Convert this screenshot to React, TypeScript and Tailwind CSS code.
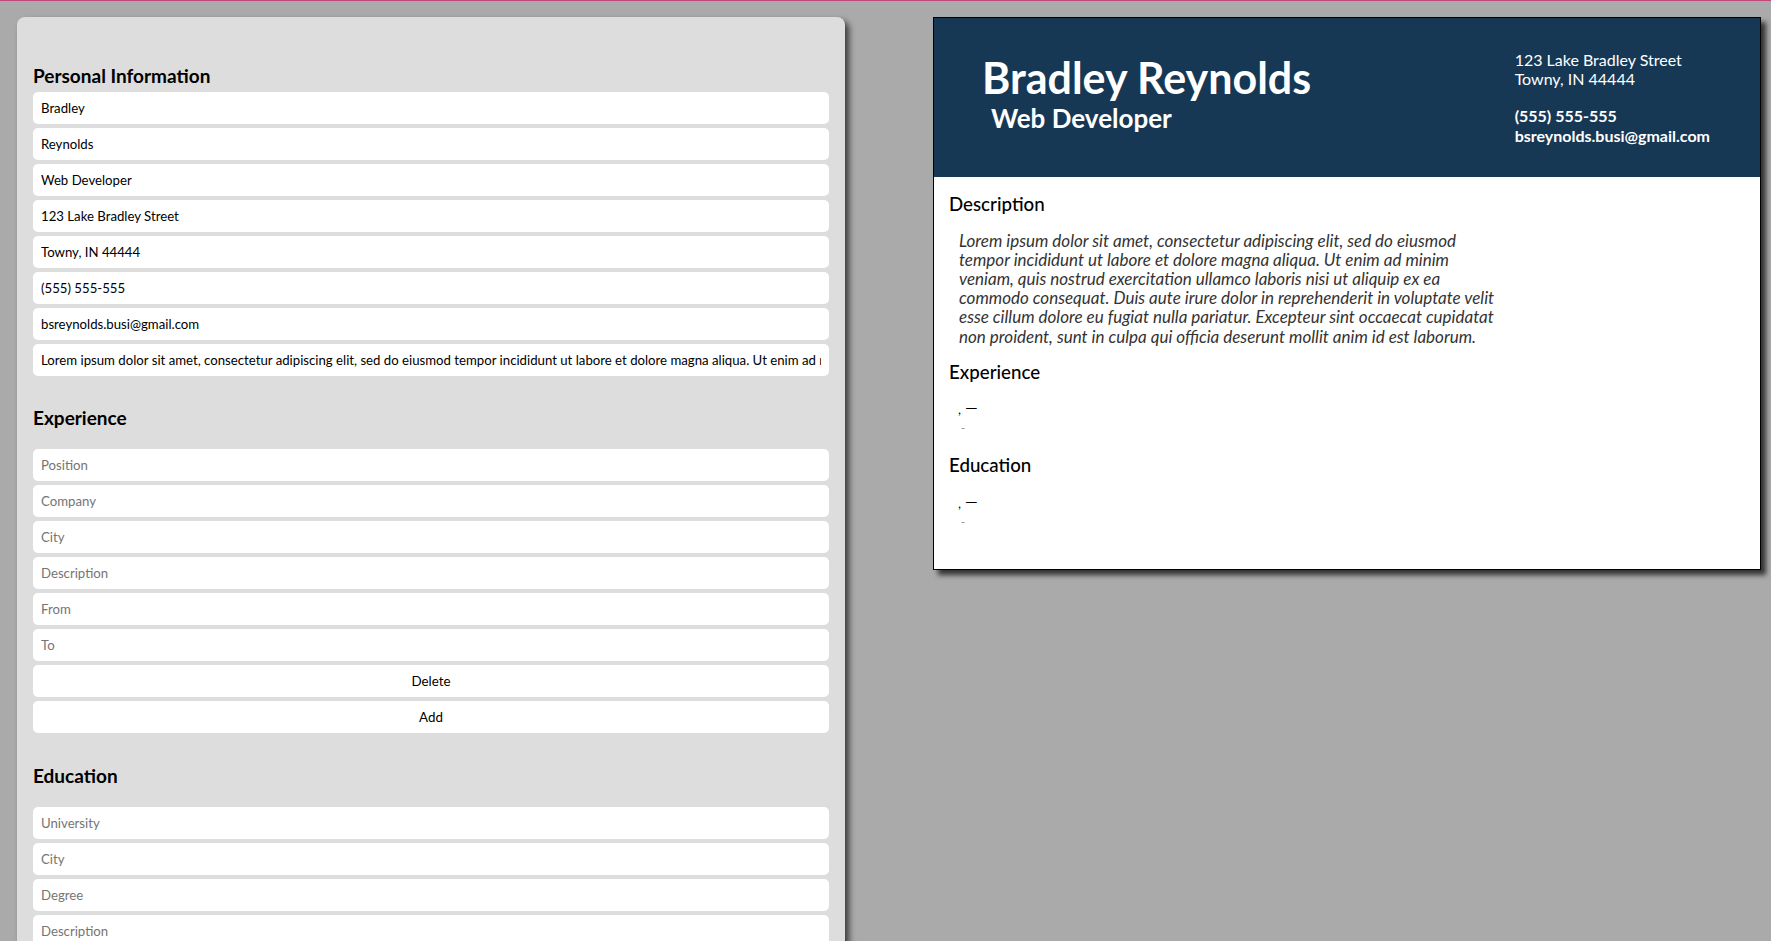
import React from "react";

const personal = [
  "Bradley",
  "Reynolds",
  "Web Developer",
  "123 Lake Bradley Street",
  "Towny, IN 44444",
  "(555) 555-555",
  "bsreynolds.busi@gmail.com",
  "Lorem ipsum dolor sit amet, consectetur adipiscing elit, sed do eiusmod tempor incididunt ut labore et dolore magna aliqua. Ut enim ad minim veniam, quis nostrud exercitation ullamco laboris nisi ut aliquip ex ea commodo consequat.",
];

const expFields = ["Position", "Company", "City", "Description", "From", "To"];
const eduFields = ["University", "City", "Degree", "Description", "From", "To"];

const inputCls =
  "block w-full h-[32px] rounded-[5px] bg-white px-[8px] text-[13.2px] text-black placeholder:text-[#757575] outline-none border-0";
const btnCls =
  "block w-full h-[32px] rounded-[5px] bg-white pt-px text-[13.33px] text-black text-center";

function Entry() {
  return (
    <div className="ml-[9px] mt-[15px]">
      <div className="text-[16px] leading-[19px] text-black">
        <span className="text-[13px]">,</span> <span className="relative top-[-1px]">—</span>
      </div>
      <div className="ml-[3px] mt-[2px] text-[11px] leading-[13px] text-[#888]">-</div>
    </div>
  );
}

export default function App() {
  return (
    <div className="min-h-screen bg-[#aaaaaa] font-['Lato','Noto_Sans',sans-serif] overflow-hidden">
      <div className="h-px bg-[#c2477a]" />
      <div className="flex items-start pl-[17px] pt-[16px] gap-[88px]">
        {/* Left form panel */}
        <div className="w-[828px] shrink-0 rounded-[8px] bg-[#dddddd] px-[16px] pt-[48px] pb-[40px] shadow-[4px_4px_6px_rgba(0,0,0,0.65)]">
          <h3 className="text-[19px] font-bold leading-[22.5px] text-black">Personal Information</h3>
          <div className="mt-[4px] flex flex-col gap-[4px]">
            {personal.map((v, i) => (
              <input key={i} className={inputCls} defaultValue={v} readOnly />
            ))}
          </div>

          <h3 className="mt-[31px] text-[19px] font-bold leading-[22.5px] text-black">Experience</h3>
          <div className="mt-[20px] flex flex-col gap-[4px]">
            {expFields.map((p) => (
              <input key={p} className={inputCls} placeholder={p} readOnly />
            ))}
            <button className={btnCls}>Delete</button>
            <button className={btnCls}>Add</button>
          </div>

          <h3 className="mt-[32px] text-[19px] font-bold leading-[22.5px] text-black">Education</h3>
          <div className="mt-[19px] flex flex-col gap-[4px]">
            {eduFields.map((p) => (
              <input key={p} className={inputCls} placeholder={p} readOnly />
            ))}
            <button className={btnCls}>Delete</button>
            <button className={btnCls}>Add</button>
          </div>
        </div>

        {/* Right resume preview */}
        <div className="w-[828px] shrink-0 border border-black bg-white shadow-[5px_5px_5px_rgba(0,0,0,0.7)]">
          <div className="flex h-[159px] items-start justify-between bg-[#163854] pl-[48px] pr-[50px] text-white">
            <div className="pt-[35px]">
              <h1 className="text-[43px] font-bold leading-[50px]">Bradley Reynolds</h1>
              <h2 className="ml-[9px] text-[26px] font-bold leading-[30px]">Web Developer</h2>
            </div>
            <div className="pt-[32px] text-[16px] leading-[19.2px]">
              <div>123 Lake Bradley Street</div>
              <div>Towny, IN 44444</div>
              <div className="h-[18px]" />
              <div className="font-bold">(555) 555-555</div>
              <div className="font-bold">bsreynolds.busi@gmail.com</div>
            </div>
          </div>
          <div className="px-[15px] pt-[16px] pb-[41px]">
            <h3 className="text-[18.72px] font-medium leading-[22.5px] text-black">Description</h3>
            <p className="ml-[10px] mt-[15px] w-[536px] text-[17px] italic leading-[19.2px] text-[#333333]">
              Lorem ipsum dolor sit amet, consectetur adipiscing elit, sed do eiusmod tempor incididunt ut labore et
              dolore magna aliqua. Ut enim ad minim veniam, quis nostrud exercitation ullamco laboris nisi ut aliquip ex
              ea commodo consequat. Duis aute irure dolor in reprehenderit in voluptate velit esse cillum dolore eu fugiat
              nulla pariatur. Excepteur sint occaecat cupidatat non proident, sunt in culpa qui officia deserunt mollit
              anim id est laborum.
            </p>
            <h3 className="mt-[15px] text-[18.72px] font-medium leading-[22.5px] text-black">Experience</h3>
            <Entry />
            <h3 className="mt-[20px] text-[18.72px] font-medium leading-[22.5px] text-black">Education</h3>
            <Entry />
          </div>
        </div>
      </div>
    </div>
  );
}
